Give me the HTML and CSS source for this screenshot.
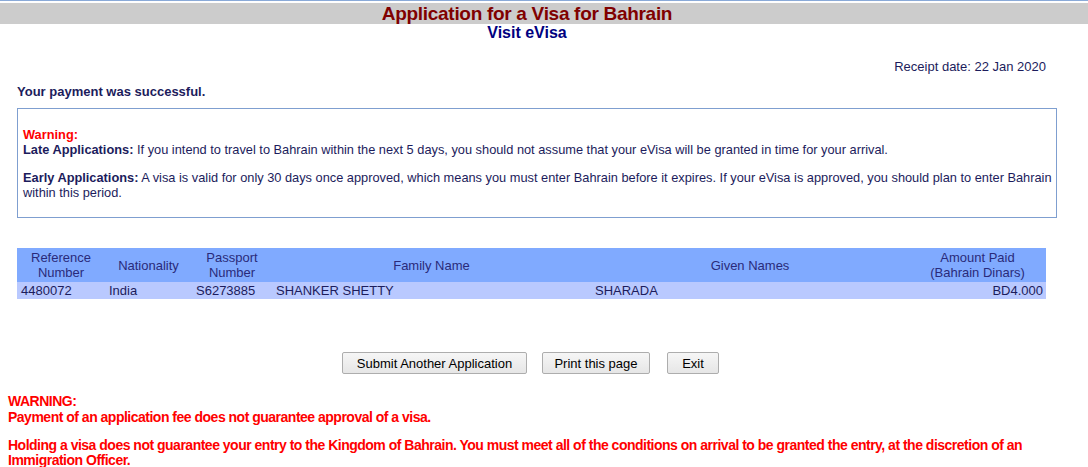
FILE: index.html
```html
<!DOCTYPE html>
<html>
<head>
<meta charset="utf-8">
<link rel="stylesheet" href="styles.css">
</head>
<body>
<div class="topline"></div>
<div class="titlebar"><h1 class="title">Application for a Visa for Bahrain</h1></div>
<h2 class="subtitle">Visit eVisa</h2>
<div class="content">
  <div class="receipt">Receipt date: 22 Jan 2020</div>
  <p class="success">Your payment was successful.</p>
  <div class="notice">
    <p class="para"><span class="warn">Warning:</span><br><b>Late Applications:</b> If you intend to travel to Bahrain within the next 5 days, you should not assume that your eVisa will be granted in time for your arrival.</p>
    <p class="para"><b>Early Applications:</b> A visa is valid for only 30 days once approved, which means you must enter Bahrain before it expires. If your eVisa is approved, you should plan to enter Bahrain within this period.</p>
  </div>
  <table class="grid">
    <colgroup>
      <col class="c1"><col class="c2"><col class="c3"><col class="c4"><col class="c5"><col class="c6">
    </colgroup>
    <thead>
      <tr class="head">
        <th>Reference<br>Number</th>
        <th>Nationality</th>
        <th>Passport<br>Number</th>
        <th>Family Name</th>
        <th>Given Names</th>
        <th>Amount Paid<br>(Bahrain Dinars)</th>
      </tr>
    </thead>
    <tbody>
      <tr class="row">
        <td>4480072</td>
        <td>India</td>
        <td>S6273885</td>
        <td>SHANKER SHETTY</td>
        <td>SHARADA</td>
        <td class="amount">BD4.000</td>
      </tr>
    </tbody>
  </table>
  <div class="actions">
    <button class="btn btn-submit">Submit Another Application</button>
    <button class="btn btn-print">Print this page</button>
    <button class="btn btn-exit">Exit</button>
  </div>
</div>
<div class="bottom">
  <p class="redp">WARNING:<br>Payment of an application fee does not guarantee approval of a visa.</p>
  <p class="redp redp-last">Holding a visa does not guarantee your entry to the Kingdom of Bahrain. You must meet all of the conditions on arrival to be granted the entry, at the discretion of an Immigration Officer.</p>
</div>
</body>
</html>
```
FILE: styles.css
```css
html, body {
  margin: 0;
  padding: 0;
  background: #ffffff;
}
body {
  font-family: "Liberation Sans", Arial, sans-serif;
  font-size: 13px;
  color: #1c1c5c;
}
.topline {
  height: 1px;
  background: #8aaad8;
  border-bottom: 2px solid #ffffff;
}
.titlebar {
  background: #cccccc;
  height: 21px;
  display: flex;
  justify-content: center;
  align-items: center;
  padding-right: 34px;
}
.title {
  margin: 0;
  font-family: "Liberation Sans", Arial, sans-serif;
  font-weight: bold;
  font-size: 19px;
  letter-spacing: -0.3px;
  line-height: 21px;
  color: #800000;
}
.subtitle {
  margin: 0;
  text-align: center;
  padding-right: 34px;
  font-size: 16px;
  line-height: 18px;
  font-weight: bold;
  color: #000080;
}
.content {
  padding: 0 31px 0 17px;
}
.receipt {
  text-align: right;
  margin: 17px 11px 0 0;
  line-height: 15px;
}
.success {
  margin: 10px 0 0;
  font-weight: bold;
  line-height: 15px;
}
.notice {
  margin-top: 9px;
  border: 1px solid #7f9fd0;
  padding: 18px 0 17px 5px;
}
.para {
  margin: 0;
  font-size: 12.8px;
  line-height: 15px;
}
.para + .para {
  margin-top: 13px;
}
.warn {
  color: #ff0000;
  font-weight: bold;
}
.grid {
  margin-top: 30px;
  border-collapse: collapse;
  table-layout: fixed;
  width: 1029px;
}
.c1 { width: 88px; }
.c2 { width: 87px; }
.c3 { width: 80px; }
.c4 { width: 319px; }
.c5 { width: 318px; }
.c6 { width: 137px; }
.head {
  background: #80aaff;
}
.head th {
  font-weight: normal;
  text-align: center;
  color: #2a2a7a;
  padding: 2px 0;
  line-height: 15px;
}
.row {
  background: #b9c9ff;
}
.row td {
  padding: 1px 4px;
  line-height: 15px;
  white-space: nowrap;
}
.row td.amount {
  text-align: right;
  padding-right: 3px;
}
.actions {
  display: flex;
  justify-content: center;
  gap: 15px;
  padding-right: 13px;
  margin-top: 53px;
}
.btn {
  font-family: "Liberation Sans", Arial, sans-serif;
  font-size: 13px;
  color: #000000;
  height: 22px;
  padding: 0;
  background: linear-gradient(#f6f6f6, #e6e6e6);
  border: 1px solid #adadad;
  border-radius: 2px;
}
.btn-submit { width: 185px; }
.btn-print { width: 108px; }
.btn-exit { width: 52px; margin-left: 2px; }
.bottom {
  padding: 0 8px;
  margin-top: 19px;
}
.redp {
  margin: 0;
  color: #ff0000;
  font-family: "Liberation Sans", Arial, sans-serif;
  font-weight: bold;
  font-size: 14px;
  letter-spacing: -0.5px;
  line-height: 16px;
}
.redp-last {
  margin-top: 13px;
  line-height: 15px;
}
```
